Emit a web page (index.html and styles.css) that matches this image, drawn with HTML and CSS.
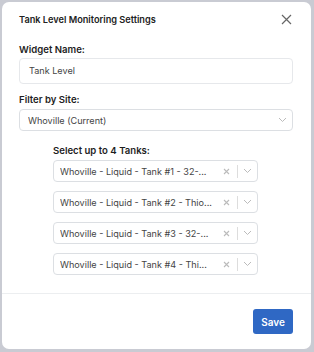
FILE: index.html
```html
<!DOCTYPE html>
<html lang="en">
<head>
    <meta charset="UTF-8">
    <title>Tank Level Monitoring Settings</title>
    <link rel="stylesheet" href="styles.css">
</head>
<body>
    <div class="modal">
        <div class="modal-header">
            <h2>Tank Level Monitoring Settings</h2>
            <button class="close-button" aria-label="Close">
                <svg width="11" height="11" viewBox="0 0 11 11"><path d="M1 1L10 10M10 1L1 10" stroke="#666" stroke-width="1.2" fill="none"/></svg>
            </button>
        </div>
        <div class="modal-body">
            <label class="field-label first-label">Widget Name:</label>
            <div class="text-input">Tank Level</div>

            <label class="field-label site-label">Filter by Site:</label>
            <div class="select site-select">
                <span class="select-value">Whoville (Current)</span>
                <span class="chevron">
                    <svg width="9" height="6" viewBox="0 0 9 6"><path d="M1 1L4.5 4.5L8 1" stroke="#bbb" stroke-width="1" fill="none"/></svg>
                </span>
            </div>

            <div class="tanks">
                <label class="field-label">Select up to 4 Tanks:</label>
                <div class="select tank-select">
                    <span class="select-value">Whoville - Liquid - Tank #1 - 32-...</span>
                    <span class="clear"><svg width="7" height="7" viewBox="0 0 7 7"><path d="M1 1L6 6M6 1L1 6" stroke="#bbb" stroke-width="1.1" fill="none"/></svg></span>
                    <span class="divider"></span>
                    <span class="chevron"><svg width="9" height="6" viewBox="0 0 9 6"><path d="M1 1L4.5 4.5L8 1" stroke="#bbb" stroke-width="1" fill="none"/></svg></span>
                </div>
                <div class="select tank-select">
                    <span class="select-value">Whoville - Liquid - Tank #2 - Thio...</span>
                    <span class="clear"><svg width="7" height="7" viewBox="0 0 7 7"><path d="M1 1L6 6M6 1L1 6" stroke="#bbb" stroke-width="1.1" fill="none"/></svg></span>
                    <span class="divider"></span>
                    <span class="chevron"><svg width="9" height="6" viewBox="0 0 9 6"><path d="M1 1L4.5 4.5L8 1" stroke="#bbb" stroke-width="1" fill="none"/></svg></span>
                </div>
                <div class="select tank-select">
                    <span class="select-value">Whoville - Liquid - Tank #3 - 32-...</span>
                    <span class="clear"><svg width="7" height="7" viewBox="0 0 7 7"><path d="M1 1L6 6M6 1L1 6" stroke="#bbb" stroke-width="1.1" fill="none"/></svg></span>
                    <span class="divider"></span>
                    <span class="chevron"><svg width="9" height="6" viewBox="0 0 9 6"><path d="M1 1L4.5 4.5L8 1" stroke="#bbb" stroke-width="1" fill="none"/></svg></span>
                </div>
                <div class="select tank-select">
                    <span class="select-value">Whoville - Liquid - Tank #4 - Thi...</span>
                    <span class="clear"><svg width="7" height="7" viewBox="0 0 7 7"><path d="M1 1L6 6M6 1L1 6" stroke="#bbb" stroke-width="1.1" fill="none"/></svg></span>
                    <span class="divider"></span>
                    <span class="chevron"><svg width="9" height="6" viewBox="0 0 9 6"><path d="M1 1L4.5 4.5L8 1" stroke="#bbb" stroke-width="1" fill="none"/></svg></span>
                </div>
            </div>
        </div>
        <div class="modal-footer">
            <button class="save-button">Save</button>
        </div>
    </div>
</body>
</html>
```

FILE: styles.css
```css
body {
    margin: 0;
    padding: 2px 3px 3px 2px;
    background: #c9cbd3;
    font-family: 'Inter', 'Liberation Sans', sans-serif;
    color: #222;
    height: 352px;
    box-sizing: border-box;
}

/* Dialog card */
.modal {
    background: #fff;
    border-radius: 7px;
    height: 347px;
    display: flex;
    flex-direction: column;
    overflow: hidden;
}

.modal-header {
    display: flex;
    justify-content: space-between;
    align-items: center;
    padding: 10px 19px 0 17px;
    height: 14px;
}

.modal-header h2 {
    margin: 0;
    font-size: 9.2px;
    font-weight: 600;
    color: #222;
}

.close-button {
    border: none;
    background: none;
    padding: 0;
    display: flex;
}

.modal-body {
    padding: 0 18px 0 17px;
    flex: 1;
    border-bottom: 1px solid #eceef0;
}

.field-label {
    display: block;
    font-size: 9.6px;
    font-weight: 600;
    color: #1e1e1e;
    margin-top: 16px;
    line-height: 14px;
}

.first-label {
    margin-top: 17px;
}

.site-label {
    margin-top: 9px;
}

.text-input {
    margin-top: 1px;
    height: 24px;
    border: 1px solid #e6e8eb;
    border-radius: 4px;
    padding: 0 9px;
    font-size: 9.1px;
    color: #444;
    line-height: 24px;
}

.select {
    display: flex;
    align-items: center;
    border: 1px solid #dcdfe3;
    border-radius: 4px;
    font-size: 9.1px;
    color: #444;
}

.site-select {
    margin-top: 2px;
    height: 20px;
    padding: 0 5px 0 8px;
}

.select-value {
    flex: 1;
    white-space: nowrap;
    overflow: hidden;
    text-overflow: ellipsis;
}

.chevron {
    display: flex;
    align-items: center;
}

/* Tank pickers, indented under the site filter */
.tanks {
    margin-left: 34px;
    width: 205px;
}

.tanks .field-label {
    margin-top: 13px;
}

.tank-select {
    height: 20px;
    margin-top: 9px;
    padding: 0 5px 0 6px;
}

.tanks .field-label + .tank-select {
    margin-top: 2px;
}

.clear {
    display: flex;
    margin: 0 7px 0 6px;
}

.divider {
    width: 1px;
    height: 13px;
    background: #ddd;
    margin-right: 5px;
}

.modal-footer {
    display: flex;
    justify-content: flex-end;
    padding: 15px 18px 15px 0;
}

.save-button {
    width: 40px;
    height: 25px;
    background: #2f68c4;
    color: #fff;
    border: none;
    border-radius: 3px;
    font-family: 'Inter', 'Liberation Sans', sans-serif;
    font-size: 10px;
    font-weight: 600;
}
```
